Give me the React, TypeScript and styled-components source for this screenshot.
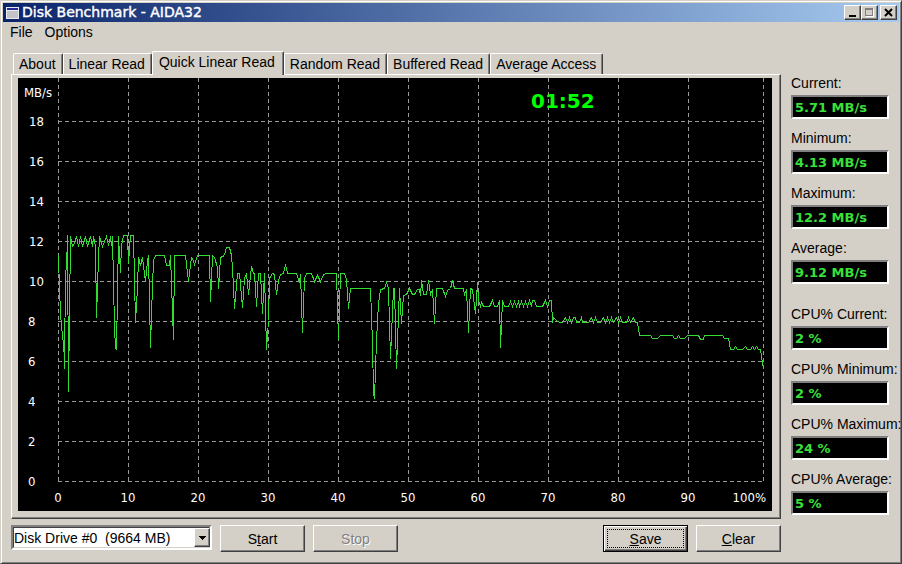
import { useState } from 'react';
import styled, { createGlobalStyle, css } from 'styled-components';

const GlobalStyle = createGlobalStyle`
  * {
    box-sizing: border-box;
  }

  body {
    margin: 0;
    background: #d4d0c8;
    color: #000;
    font-family: 'Liberation Sans', Arial, sans-serif;
    font-size: 14px;
  }

  button,
  input,
  select {
    font: inherit;
    color: inherit;
  }
`;

const raised = css`
  border: 1px solid;
  border-color: #fff #404040 #404040 #fff;
  box-shadow: inset -1px -1px 0 #808080;
`;

const sunken = css`
  border: 2px solid;
  border-color: #808080 #fff #fff #808080;
`;

const Window = styled.div`
  display: flex;
  flex-direction: column;
  min-height: 100vh;
  padding: 1px;
  background: #d4d0c8;
  border: 1px solid;
  border-color: #d4d0c8 #404040 #404040 #d4d0c8;
  box-shadow:
    inset 1px 1px 0 #fff,
    inset -1px -1px 0 #808080;
`;

const TitleBar = styled.header`
  display: flex;
  align-items: center;
  height: 19px;
  margin: 1px 1px 0;
  padding: 0 2px 0 3px;
  background: linear-gradient(to right, #0a246a, #a6caf0);
`;

const Title = styled.h1`
  flex: 1;
  margin: 0 0 0 3px;
  color: #fff;
  font-family: 'DejaVu Sans', Verdana, sans-serif;
  font-size: 14px;
  font-weight: 400;
  line-height: 19px;
  -webkit-text-stroke: 0.4px #fff;
`;

const CaptionButton = styled.button<{ $gap?: boolean }>`
  display: flex;
  width: 17px;
  height: 15px;
  margin-left: ${({ $gap }) => ($gap ? '2px' : '0')};
  padding: 0;
  background: #d4d0c8;
  ${raised}
`;

const MenuBar = styled.nav`
  display: flex;
  gap: 12px;
  height: 29px;
  padding: 0 8px;
`;

const MenuItem = styled.button`
  height: 20px;
  padding: 0;
  border: none;
  background: none;
  line-height: 20px;
`;

const Body = styled.div`
  display: flex;
  flex: 1;
  gap: 10px;
  padding: 0 3px 0 9px;
`;

const Main = styled.main`
  flex: 1;
  min-width: 0;
`;

const TabList = styled.div`
  display: flex;
  align-items: flex-end;
  height: 23px;
  padding-left: 2px;
`;

const Tab = styled.button<{ $active: boolean }>`
  height: ${({ $active }) => ($active ? '24px' : '21px')};
  margin-bottom: ${({ $active }) => ($active ? '-1px' : '0')};
  padding: ${({ $active }) => ($active ? '0 8px 3px 6px' : '0 6px 0 5px')};
  background: #d4d0c8;
  border: 1px solid;
  border-color: #fff #404040 transparent #fff;
  border-bottom: none;
  border-radius: 2px 2px 0 0;
  box-shadow: inset -1px 0 0 #808080;
  line-height: 18px;
  white-space: nowrap;
`;

const TabPanel = styled.section`
  padding: 3px 8px 7px 6px;
  ${raised}
`;

const Chart = styled.svg`
  display: block;
  width: 100%;
  height: auto;
  background: #000;

  text {
    fill: #fff;
    font-family: 'DejaVu Sans Condensed', 'DejaVu Sans', sans-serif;
    font-size: 13px;
  }

  .clock {
    fill: #0f0;
    font-family: 'DejaVu Sans', Verdana, sans-serif;
    font-size: 20px;
    font-weight: 700;
  }
`;

const Footer = styled.div`
  display: flex;
  gap: 8px;
  align-items: flex-start;
  padding-top: 6px;
`;

const Spacer = styled.div`
  flex: 1;
`;

const DriveBox = styled.div`
  position: relative;
  width: 201px;
  height: 25px;
  ${sunken}
`;

const DriveSelect = styled.select`
  display: block;
  width: 100%;
  height: 21px;
  padding: 0 20px 0 0;
  appearance: none;
  background: #fff;
  border: 1px solid;
  border-color: #404040 #d4d0c8 #d4d0c8 #404040;
  border-radius: 0;
`;

const DropArrow = styled.span`
  position: absolute;
  top: 1px;
  right: 0;
  display: flex;
  align-items: center;
  justify-content: center;
  width: 16px;
  height: 19px;
  background: #d4d0c8;
  pointer-events: none;
  ${raised}
`;

const PushButton = styled.button<{ $default?: boolean }>`
  width: 85px;
  height: 27px;
  padding: 0;
  background: #d4d0c8;
  ${raised}

  ${({ $default }) =>
    $default &&
    css`
      border-color: #000;
      box-shadow:
        inset 1px 1px 0 #fff,
        inset -1px -1px 0 #404040,
        inset -2px -2px 0 #808080;
      outline: 1px dotted #000;
      outline-offset: -5px;
    `}

  &:disabled {
    color: #808080;
    text-shadow: 1px 1px 0 #fff;
  }
`;

const Sidebar = styled.aside`
  display: flex;
  flex-direction: column;
  gap: 22px;
  width: 106px;
  padding-top: 24px;
`;

const Group = styled.div`
  display: flex;
  flex-direction: column;
  gap: 11px;
`;

const Field = styled.div`
  display: flex;
  flex-direction: column;
  height: 44px;
`;

const FieldLabel = styled.label`
  height: 20px;
  line-height: 16px;
  white-space: nowrap;
`;

const FieldValue = styled.input`
  width: 98px;
  height: 24px;
  padding: 0 2px;
  background: #000;
  border-radius: 0;
  color: #3ae03a;
  font-family: 'DejaVu Sans', Verdana, sans-serif;
  font-size: 13px;
  font-weight: 700;
  ${sunken}
`;

const tabs = [
  'About',
  'Linear Read',
  'Quick Linear Read',
  'Random Read',
  'Buffered Read',
  'Average Access',
];

const speedStats = [
  { label: 'Current:', value: '5.71 MB/s' },
  { label: 'Minimum:', value: '4.13 MB/s' },
  { label: 'Maximum:', value: '12.2 MB/s' },
  { label: 'Average:', value: '9.12 MB/s' },
];

const cpuStats = [
  { label: 'CPU% Current:', value: '2 %' },
  { label: 'CPU% Minimum:', value: '2 %' },
  { label: 'CPU% Maximum:', value: '24 %' },
  { label: 'CPU% Average:', value: '5 %' },
];

// Trace of the read speed, in plot units (20 units per MB/s, zero at y = 481)
const trace = `
58,255 59,290 60,310 61,328 62,333 63,345 64,358 64,368 65,270 66,269 67,235 68,391 70,236 72,246
74,243 76,236 78,246 80,236 82,246 85,236 87,246 90,236 92,246 93,236 95,246 96,317 98,257 99,236
102,246 104,241 106,236 108,245 110,236 111,245 112,236 114,327 115,347 116,349 118,236 120,272
121,245 123,235 127,235 128,263 130,235 133,235 135,322 137,287 138,257 140,265 142,257 145,281
147,260 148,255 150,347 151,313 153,260 155,255 164,255 166,265 169,265 170,255 173,339 174,255
185,255 188,281 191,257 192,258 194,264 197,255 209,255 210,301 212,255 214,257 217,267 218,288
220,257 224,255 226,247 229,247 231,255 232,267 234,308 237,273 239,273 242,307 244,278 246,273
248,294 251,266 253,273 254,273 256,306 258,273 260,273 262,313 264,273 266,349 268,320 269,278
272,273 274,274 276,294 278,280 280,274 283,273 285,264 287,273 296,273 299,282 300,274 302,332
304,278 306,273 311,273 314,281 317,275 320,281 323,274 326,273 336,273 338,339 340,273 344,273
346,279 348,308 350,288 370,288 372,343 373,392 374,398 376,340 378,303 380,289 384,288 386,282
388,288 390,358 393,288 394,288 396,368 399,288 401,323 403,295 406,294 409,288 412,294 414,294
417,289 419,289 420,295 421,280 423,294 426,294 428,280 430,294 432,289 434,323 436,288 442,288
445,296 447,290 450,288 452,280 454,288 463,288 464,294 466,289 468,332 470,288 472,289 475,313
477,282 478,300 480,306 481,302 483,306 489,306 492,300 494,306 497,306 499,300 500,347 502,300
504,306 508,306 510,301 512,306 514,301 516,306 518,301 519,306 521,301 523,306 525,301 527,306
529,300 531,306 532,300 534,300 536,306 542,306 545,300 547,306 549,300 551,300 552,322 553,317
556,320 559,322 562,322 565,317 567,322 569,317 571,322 573,317 575,317 576,322 579,322 581,317
582,322 588,322 591,317 593,322 595,317 597,322 600,322 603,317 605,322 607,317 609,322 611,317
613,322 616,317 618,322 620,317 622,322 626,322 628,317 630,322 633,317 635,322 637,322 639,335
650,335 652,338 657,338 660,335 672,335 674,338 676,338 678,335 680,338 684,338 687,335 698,335
700,339 703,339 704,335 722,335 724,338 728,338 730,349 733,349 735,346 737,349 742,349 745,346
747,349 750,349 752,346 754,349 756,346 758,349 760,349 762,363 763,367`;

const columns = [0, 10, 20, 30, 40, 50, 60, 70, 80, 90];
const rows = [0, 2, 4, 6, 8, 10, 12, 14, 16, 18];

const SpeedChart = () => (
  <Chart viewBox="18 78 754 433" role="img" aria-label="Quick Linear Read">
    <g stroke="#999" strokeDasharray="4 3" shapeRendering="crispEdges">
      {rows.map((mb) => (
        <line key={mb} x1="58" x2="764" y1={481.5 - mb * 20} y2={481.5 - mb * 20} />
      ))}
      {columns.map((pct) => (
        <line key={pct} x1={58.5 + pct * 7} x2={58.5 + pct * 7} y1="78" y2="482" />
      ))}
      <line x1="763.5" x2="763.5" y1="78" y2="482" />
    </g>
    <text x="24" y="97">
      MB/s
    </text>
    {rows.map((mb) => (
      <text key={mb} x={mb < 10 ? 28 : 29} y={486 - mb * 20}>
        {mb}
      </text>
    ))}
    {columns.map((pct) => (
      <text key={pct} x={58 + pct * 7} y="502" textAnchor="middle">
        {pct}
      </text>
    ))}
    <text x="766" y="502" textAnchor="end">
      100%
    </text>
    <polyline
      points={trace}
      transform="translate(0.5 0.5)"
      fill="none"
      stroke="#32dc32"
      shapeRendering="crispEdges"
    />
    <text className="clock" x="531" y="108">
      01:52
    </text>
  </Chart>
);

const Stat = ({ label, value }: { label: string; value: string }) => {
  const id = label.replace(/\W+/g, '-').toLowerCase();
  return (
    <Field>
      <FieldLabel htmlFor={id}>{label}</FieldLabel>
      <FieldValue id={id} value={value} readOnly />
    </Field>
  );
};

const App = () => {
  const [activeTab, setActiveTab] = useState('Quick Linear Read');

  return (
    <>
      <GlobalStyle />
      <Window>
        <TitleBar>
          <svg width="13" height="12" viewBox="0 0 13 12" shapeRendering="crispEdges">
            <rect width="13" height="12" fill="#e8e8f0" />
            <rect x="1" y="1" width="11" height="2" fill="#2a2a9c" />
            <rect x="1" y="4" width="11" height="7" fill="#c4c2c8" />
          </svg>
          <Title>Disk Benchmark - AIDA32</Title>
          <CaptionButton aria-label="Minimize">
            <svg width="15" height="13" shapeRendering="crispEdges">
              <rect x="4" y="9" width="7" height="2" />
            </svg>
          </CaptionButton>
          <CaptionButton aria-label="Maximize" disabled>
            <svg width="15" height="13" shapeRendering="crispEdges" fill="none">
              <path d="M4 10.5h8M11.5 3v8" stroke="#fff" />
              <path d="M3 2.5h8M3 3.5h8M3.5 2v8M10.5 2v8M3 9.5h8" stroke="#808080" />
            </svg>
          </CaptionButton>
          <CaptionButton aria-label="Close" $gap>
            <svg width="15" height="13">
              <path d="M4 3l7 7M11 3l-7 7" stroke="#000" strokeWidth="2" />
            </svg>
          </CaptionButton>
        </TitleBar>
        <MenuBar>
          <MenuItem>File</MenuItem>
          <MenuItem>Options</MenuItem>
        </MenuBar>
        <Body>
          <Main>
            <TabList role="tablist">
              {tabs.map((tab) => (
                <Tab
                  key={tab}
                  role="tab"
                  aria-selected={tab === activeTab}
                  $active={tab === activeTab}
                  onClick={() => setActiveTab(tab)}
                >
                  {tab}
                </Tab>
              ))}
            </TabList>
            <TabPanel role="tabpanel">
              <SpeedChart />
            </TabPanel>
            <Footer>
              <DriveBox>
                <DriveSelect aria-label="Drive">
                  <option>Disk Drive #0{'\u00a0'} (9664 MB)</option>
                </DriveSelect>
                <DropArrow>
                  <svg width="7" height="4" shapeRendering="crispEdges">
                    <path d="M0 0h7L3.5 4z" />
                  </svg>
                </DropArrow>
              </DriveBox>
              <PushButton>
                S<u>t</u>art
              </PushButton>
              <PushButton disabled>Stop</PushButton>
              <Spacer />
              <PushButton $default>
                <u>S</u>ave
              </PushButton>
              <PushButton>
                <u>C</u>lear
              </PushButton>
            </Footer>
          </Main>
          <Sidebar>
            <Group>
              {speedStats.map((stat) => (
                <Stat key={stat.label} {...stat} />
              ))}
            </Group>
            <Group>
              {cpuStats.map((stat) => (
                <Stat key={stat.label} {...stat} />
              ))}
            </Group>
          </Sidebar>
        </Body>
      </Window>
    </>
  );
};

export default App;
